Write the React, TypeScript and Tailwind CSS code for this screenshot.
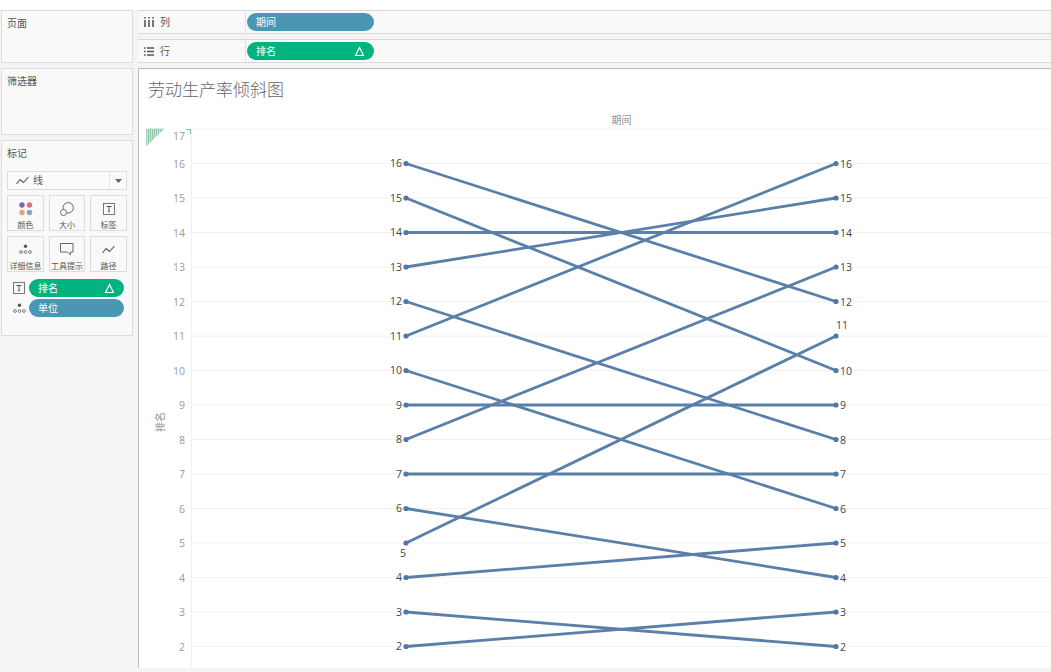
import React from 'react';

const cjk = { fontFamily: '"Open Sans", "Noto Sans CJK SC", sans-serif' };

const yOf = (v: number) => 163.5 + (16 - v) * 34.5;
const LEFT_X = 406;
const RIGHT_X = 836;

// rank in first period -> rank in last period
const slopes: [number, number][] = [
  [16, 12], [15, 10], [14, 14], [13, 15], [12, 8], [11, 16], [10, 6], [9, 9],
  [8, 13], [7, 7], [6, 4], [5, 11], [4, 5], [3, 2], [2, 3],
];
const axisTicks = [17, 16, 15, 14, 13, 12, 11, 10, 9, 8, 7, 6, 5, 4, 3, 2];

const TextBoxIcon = () => (
  <svg width="12" height="12" viewBox="0 0 12 12">
    <rect x="0.5" y="0.5" width="11" height="11" fill="none" stroke="#777" />
    <path d="M3.5 3.5h5M6 3.5v5.2M5 8.7h2" fill="none" stroke="#555" />
  </svg>
);

const DetailIcon = () => (
  <svg width="13" height="11" viewBox="0 0 13 11">
    <circle cx="6.5" cy="2.2" r="1.7" fill="#555" />
    <circle cx="2" cy="8" r="1.4" fill="none" stroke="#666" strokeWidth="0.8" />
    <circle cx="6.5" cy="8" r="1.4" fill="none" stroke="#666" strokeWidth="0.8" />
    <circle cx="11" cy="8" r="1.4" fill="none" stroke="#666" strokeWidth="0.8" />
  </svg>
);

const PathIcon = ({ w = 13 }: { w?: number }) => (
  <svg width={w} height="9" viewBox="0 0 13 9">
    <path d="M0.5 8 L4 3.5 L7.5 6.5 L12.5 1" fill="none" stroke="#555" strokeWidth="1.1" />
  </svg>
);

const ColorIcon = () => (
  <svg width="14" height="14" viewBox="0 0 14 14">
    <circle cx="3" cy="3" r="2.7" fill="#7b6a9d" />
    <circle cx="10.5" cy="3" r="2.7" fill="#e8677f" />
    <circle cx="3" cy="10.5" r="2.7" fill="#f0a273" />
    <circle cx="10.5" cy="10.5" r="2.7" fill="#7ea3cf" />
  </svg>
);

const SizeIcon = () => (
  <svg width="14" height="14" viewBox="0 0 14 14">
    <circle cx="8.2" cy="5.8" r="5.2" fill="none" stroke="#666" />
    <circle cx="3.5" cy="10.5" r="3" fill="#fff" stroke="#666" />
  </svg>
);

const TooltipIcon = () => (
  <svg width="14" height="13" viewBox="0 0 14 13">
    <path d="M0.5 0.5h12.5v8.5h-2.5v3l-3-3h-7z" fill="none" stroke="#666" />
  </svg>
);

const MarkButton = ({ icon, label, wide }: { icon: React.ReactNode; label: string; wide?: boolean }) => (
  <div className={`h-[36px] bg-[#f9f9f9] border border-[#dcdcdc] flex flex-col items-center ${wide ? 'w-[36px]' : 'w-[37px]'}`}>
    <div className="h-[23px] flex items-center justify-center pt-[2px]">{icon}</div>
    <span className="text-[8px] leading-[11px] text-[#555] whitespace-nowrap">{label}</span>
  </div>
);

const Pill = ({ label, color, delta, className }: { label: string; color: string; delta?: boolean; className: string }) => (
  <div className={`rounded-full flex items-center justify-between text-white text-[10px] pl-[9px] pr-[9px] ${color} ${className}`}>
    <span>{label}</span>
    {delta && (
      <svg width="11" height="11" viewBox="0 0 11 11">
        <path d="M5.5 1.5 L9.5 9.5 H1.5 Z" fill="none" stroke="#fff" strokeWidth="1.2" />
      </svg>
    )}
  </div>
);

const Shelf = ({ icon, label, pill }: { icon: React.ReactNode; label: string; pill: React.ReactNode }) => (
  <div className="h-[24px] bg-[#f9f9f9] border-y border-[#d9d9d9] flex items-center">
    <div className="w-[108px] h-full flex items-center pl-[6px] gap-[6px] border-r border-[#e2e2e2] text-[10px] text-[#555]">
      {icon}
      <span>{label}</span>
    </div>
    <div className="pl-[1px]">{pill}</div>
  </div>
);

const Panel = ({ title, className, children }: { title: string; className: string; children?: React.ReactNode }) => (
  <div className={`bg-[#f9f9f9] border border-[#dcdcdc] px-[5px] ${className}`}>
    <div className="text-[10px] leading-[14px] text-[#555] pt-[5px]">{title}</div>
    {children}
  </div>
);

const SlopeChart = () => (
  <svg className="block" width="912" height="558" viewBox="139 110 912 558" style={{ fontFamily: '"Open Sans", "Noto Sans CJK SC", sans-serif' }}>
    <text x="621.5" y="124" fontSize="10" textAnchor="middle" fill="#8f8f8f">期间</text>

    {/* sort marker in the axis corner */}
    <defs>
      <pattern id="hatch" width="2" height="2" patternUnits="userSpaceOnUse">
        <rect width="1" height="2" fill="#8cc5a5" />
        <rect x="1" width="1" height="2" fill="#cde6d7" />
      </pattern>
    </defs>
    <path d="M146.5 129 H163.5 L146.5 145.5 Z" fill="url(#hatch)" stroke="#9fcfb4" strokeWidth="0.8" />
    <path d="M186 129.5 H190.5 V134" fill="none" stroke="#7fbf9c" strokeWidth="1.2" />

    <line x1="191" y1="129" x2="1051" y2="129" stroke="#f2f2f2" />
    <line x1="191.5" y1="129" x2="191.5" y2="668" stroke="#f0f0f0" />
    {axisTicks.map((v) => v !== 17 && (
      <line key={v} x1="191" y1={yOf(v)} x2="1051" y2={yOf(v)} stroke="#f2f2f2" />
    ))}
    {axisTicks.map((v) => (
      <text key={v} x="185" y={v === 17 ? 139.5 : yOf(v) + 4} fontSize="10.5" textAnchor="end" fill="#9a9a9a">{v}</text>
    ))}
    <text transform="translate(164 422) rotate(-90)" fontSize="10" textAnchor="middle" fill="#8f8f8f">排名</text>

    {slopes.map(([a, b]) => (
      <g key={a}>
        <line x1={LEFT_X} y1={yOf(a)} x2={RIGHT_X} y2={yOf(b)} stroke="#5a7fa9" strokeWidth="2.8" />
        <circle cx={LEFT_X} cy={yOf(a)} r="2.6" fill="#4f78a6" />
        <circle cx={RIGHT_X} cy={yOf(b)} r="2.6" fill="#4f78a6" />
      </g>
    ))}

    {slopes.map(([a]) => a === 5
      ? <text key={a} x="403" y="557" fontSize="10.5" textAnchor="middle" fill="#444">5</text>
      : <text key={a} x="402" y={yOf(a) + 3.5} fontSize="10.5" textAnchor="end" fill="#444">{a}</text>)}
    {slopes.map(([, b]) => b === 11
      ? <text key={b} x="842" y="329" fontSize="10.5" textAnchor="middle" fill="#444">11</text>
      : <text key={b} x="840" y={yOf(b) + 4} fontSize="10.5" fill="#444">{b}</text>)}
  </svg>
);

export default function App() {
  return (
    <div className="w-[1051px] h-[672px] overflow-hidden flex flex-col bg-white" style={cjk}>
      <div className="h-[10px] shrink-0" />
      <div className="flex-1 flex bg-[#f4f4f4] min-h-0 relative">
        <div className="w-[138px] shrink-0 pl-[1px] pr-[5px] flex flex-col">
          <Panel title="页面" className="h-[53px]" />
          <Panel title="筛选器" className="h-[67px] mt-[5px]" />
          <Panel title="标记" className="h-[196px] mt-[5px]">
            <div className="mt-[11px] h-[19px] bg-[#fbfbfb] border border-[#dcdcdc] flex items-center">
              <div className="w-[102px] h-full flex items-center pl-[8px] gap-[4px] border-r border-[#e6e6e6] text-[10px] text-[#555]">
                <PathIcon />
                <span>线</span>
              </div>
              <div className="flex-1 flex justify-center">
                <svg width="7" height="4" viewBox="0 0 7 4"><path d="M0 0h7L3.5 4z" fill="#666" /></svg>
              </div>
            </div>
            <div className="mt-[5px] grid grid-cols-[37px_36px_37px] gap-x-[5px] gap-y-[5px]">
              <MarkButton icon={<ColorIcon />} label="颜色" />
              <MarkButton icon={<SizeIcon />} label="大小" wide />
              <MarkButton icon={<TextBoxIcon />} label="标签" />
              <MarkButton icon={<DetailIcon />} label="详细信息" />
              <MarkButton icon={<TooltipIcon />} label="工具提示" wide />
              <MarkButton icon={<PathIcon />} label="路径" />
            </div>
            <div className="mt-[7px] flex flex-col gap-[2px]">
              <div className="flex items-center justify-between pl-[6px] pr-[3px]">
                <TextBoxIcon />
                <Pill label="排名" color="bg-[#02b37f]" delta className="w-[95px] h-[18px]" />
              </div>
              <div className="flex items-center justify-between pl-[6px] pr-[3px]">
                <DetailIcon />
                <Pill label="单位" color="bg-[#4a97b4]" className="w-[95px] h-[18px]" />
              </div>
            </div>
          </Panel>
        </div>

        <div className="flex-1 min-w-0 flex flex-col">
          <Shelf
            label="列"
            icon={
              <svg width="10" height="10" viewBox="0 0 10 10">
                <path d="M1 3v7M5 3v7M9 3v7" stroke="#555" strokeWidth="1.6" />
                <path d="M1 0v1.6M5 0v1.6M9 0v1.6" stroke="#555" strokeWidth="1.6" />
              </svg>
            }
            pill={<Pill label="期间" color="bg-[#4a97b4]" className="w-[127px] h-[18px]" />}
          />
          <div className="h-[5px]" />
          <Shelf
            label="行"
            icon={
              <svg width="10" height="9" viewBox="0 0 10 9">
                <path d="M0 1h1.6M3 1h7M0 4.5h1.6M3 4.5h7M0 8h1.6M3 8h7" stroke="#555" strokeWidth="1.4" />
              </svg>
            }
            pill={<Pill label="排名" color="bg-[#02b37f]" delta className="w-[127px] h-[18px]" />}
          />
          <div className="h-[5px]" />
          <div className="h-[600px] bg-white border-l border-t border-[#bdbdbd]">
            <div className="h-[41px] pl-[9px] pt-[9px] text-[17px] leading-[24px] font-light text-[#666]">劳动生产率倾斜图</div>
            <SlopeChart />
          </div>
        </div>
      </div>
    </div>
  );
}
